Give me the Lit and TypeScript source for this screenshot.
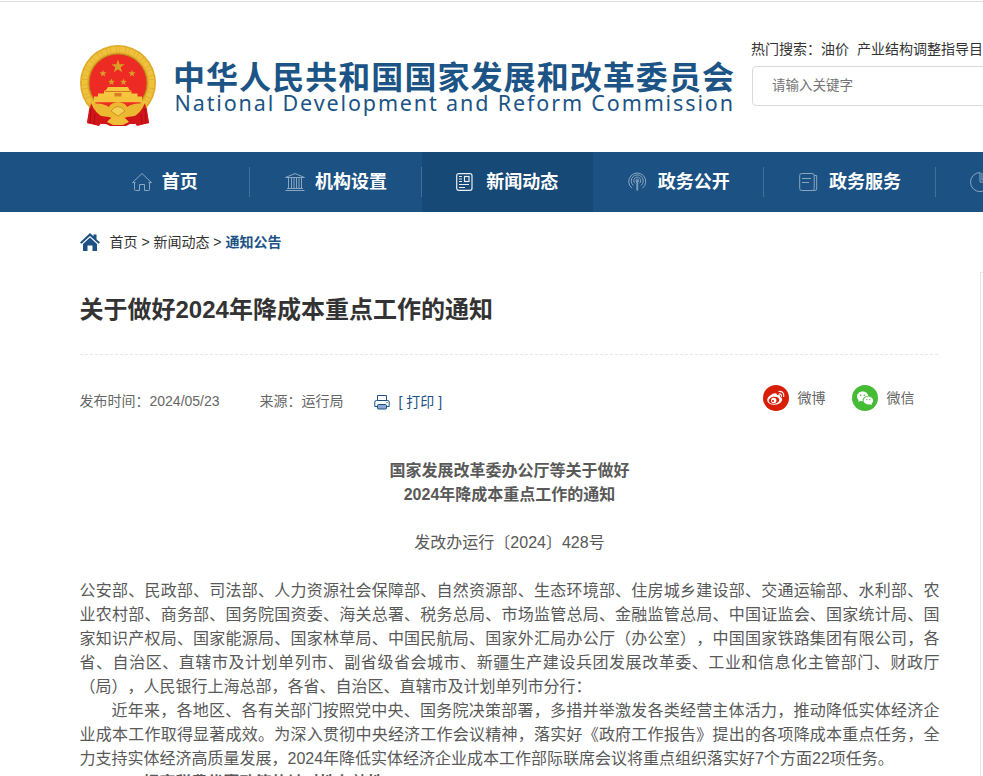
import { LitElement, html, svg, css } from "lit";
import { customElement } from "lit/decorators.js";
import { classMap } from "lit/directives/class-map.js";

const star = (cx: number, cy: number, r: number) => {
  const pts: string[] = [];
  for (let i = 0; i < 10; i++) {
    const rr = i % 2 ? r * 0.4 : r;
    const a = -Math.PI / 2 + (i * Math.PI) / 5;
    pts.push(`${(cx + rr * Math.cos(a)).toFixed(2)},${(cy + rr * Math.sin(a)).toFixed(2)}`);
  }
  return svg`<polygon points=${pts.join(" ")} fill="#d9a025"/>`;
};

const icons = {
  home: svg`<path d="M.5 10.6 10 1.5l9.500 9.100h-3M3.500 10.600H.5M2.500 11v6.500q0 1 1 1h4v-6h5v6h4q1 0 1-1V11"/>`,
  bank: svg`<path d="M.5 5.500 10 1.500l9.500 4zM.5 18.500h19M2 16.500h16M3.500 6v10.500M6.500 6v10.500M9 6v10.500M11.500 6v10.500M14 6v10.500M16.500 6v10.500"/>`,
  news: svg`<rect x=".7" y="1.700" width="15.300" height="16.600" rx="2"/><rect x="8.500" y="4.500" width="4.500" height="5"/><path d="M3 4.500h3M3 7h3M3 9.500h3M3 12.500h10M3 15.500h6"/>`,
  signal: svg`<path d="M4 16.200A8.500 8.500 0 1 1 14.500 16.200M5.400 13.500A6 6 0 1 1 13.100 13.500M7 11.300A3.500 3.500 0 1 1 11.500 11.300M8.900 18.500V8.500h.8v10"/><circle cx="9.300" cy="8.500" r="1.400"/>`,
  service: svg`<rect x=".7" y="1.500" width="14.500" height="17" rx="2"/><path d="M3 6.500h9M3 10.500h7M15.200 3.500h2.500V17q0 1.500-2 1.500h-2"/>`,
  chart: svg`<path d="M10 .6A9.500 9.500 0 1 0 19.500 10H10zM12 .6V8h7.300"/>`,
};

const nav: { icon: keyof typeof icons; label: string; active?: boolean }[] = [
  { icon: "home", label: "首页" },
  { icon: "bank", label: "机构设置" },
  { icon: "news", label: "新闻动态", active: true },
  { icon: "signal", label: "政务公开" },
  { icon: "service", label: "政务服务" },
  { icon: "chart", label: "" },
];

const lines: { text: string; full?: boolean; indent?: boolean; bold?: boolean }[] = [
  { text: "公安部、民政部、司法部、人力资源社会保障部、自然资源部、生态环境部、住房城乡建设部、交通运输部、水利部、农", full: true },
  { text: "业农村部、商务部、国务院国资委、海关总署、税务总局、市场监管总局、金融监管总局、中国证监会、国家统计局、国", full: true },
  { text: "家知识产权局、国家能源局、国家林草局、中国民航局、国家外汇局办公厅（办公室），中国国家铁路集团有限公司，各", full: true },
  { text: "省、自治区、直辖市及计划单列市、副省级省会城市、新疆生产建设兵团发展改革委、工业和信息化主管部门、财政厅", full: true },
  { text: "（局），人民银行上海总部，各省、自治区、直辖市及计划单列市分行：" },
  { text: "近年来，各地区、各有关部门按照党中央、国务院决策部署，多措并举激发各类经营主体活力，推动降低实体经济企", full: true, indent: true },
  { text: "业成本工作取得显著成效。为深入贯彻中央经济工作会议精神，落实好《政府工作报告》提出的各项降成本重点任务，全", full: true },
  { text: "力支持实体经济高质量发展，2024年降低实体经济企业成本工作部际联席会议将重点组织落实好7个方面22项任务。" },
  { text: "一、提高税费优惠政策的针对性有效性", indent: true, bold: true },
];

@customElement("site-header")
class SiteHeader extends LitElement {
  static styles = css`
    :host { display: block; padding-top: 1px; }
    .top { height: 150px; border-top: 1px solid #ddd; padding-left: 80px; display: flex; overflow: hidden; }
    .emblem { width: 76px; height: 82px; margin-top: 43px; flex: none; }
    .name { width: 564px; height: 66px; margin: 51px 0 0 17px; flex: none; }
    .cn { font: 700 32px "Noto Sans CJK SC", sans-serif; fill: #1b5485; }
    .en { font: 400 21.5px "Noto Sans", sans-serif; fill: #1b5485; }
    .side { margin: 37px 0 0 15px; width: 300px; flex: none; white-space: nowrap; }
    .hot { height: 20px; line-height: 20px; font-size: 14px; color: #333; display: flex; margin-left: -1px; }
    .hot span + span { margin-left: 8px; }
    .search { margin-top: 7px; height: 38px; line-height: 37px; border: 1px solid #d9d9d9; border-radius: 4px; padding-left: 19px; font-size: 13.5px; color: #757575; }
  `;
  render() {
    return html`<div class="top">
      <svg class="emblem" viewBox="0 0 76 82">
        <path d="M10 58 7 78l12 3 3-4 8 4h16l8-4 3 4 12-3-3-20z" fill="#d31519"/>
        <circle cx="38" cy="38" r="38" fill="#dfab28"/>
        <circle cx="38" cy="38" r="33.500" fill="none" stroke="#efc23e" stroke-width="5.500" stroke-dasharray="5 .8 3 .6"/>
        <circle cx="38" cy="38" r="29" fill="#ee2a24" stroke="#b98316"/>
        ${star(38, 21.500, 7)}${star(23, 28.500, 3.800)}${star(52, 28.500, 3.800)}${star(31.500, 37, 3.600)}${star(43.500, 37, 3.600)}
        <path d="M28 42h20l1.500 3 2 1v2.500h6V52H18v-3.500h6V46l2-1z" fill="#f6c63e"/>
        <path d="M25 46.500h26" stroke="#cf5c20" stroke-width=".8"/>
        <path d="M14 51.500h48v6H14z" fill="#f4c33b"/>
        <path d="M34.500 48h7v3.500h-7z" fill="#dd7a25"/>
        <path d="M15 57.500h46l-6 7H21z" fill="#ee2a24"/>
        <path d="M12 59q10-2 17 3 1-4 9-5 8 1 9 5 7-5 17-3-4 13-17 14l-9 3-9-3Q16 72 12 59z" fill="#edb831"/>
        <path d="M31 66q7-9 14 0l-7 5z" fill="#f6cf52" stroke="#bc8216" stroke-width=".7"/>
        <path d="M21 71l8 1 9 4 9-4 8-1v8H21z" fill="#d31519"/>
        <path d="M27 77q6-7 11-4 5-3 11 4l-6 3H33z" fill="#f1bd38"/>
        <path d="M11 58 7 78l12 2 4-8q-8-4-12-14zM65 58l4 20-12 2-4-8q8-4 12-14z" fill="#d31519"/>
        <path d="M11 64l-1 14M15 69l-1 10M61 69l1 10M65 64l1 14" stroke="#a50d12"/>
      </svg>
      <svg class="name" viewBox="0 0 564 66">
        <text class="cn" x="0" y="36" textLength="561">中华人民共和国国家发展和改革委员会</text>
        <text class="en" x="1.500" y="58" textLength="558.500">National Development and Reform Commission</text>
      </svg>
      <div class="side">
        <div class="hot"><span>热门搜索：油价</span><span>产业结构调整指导目录</span></div>
        <div class="search">请输入关键字</div>
      </div>
    </div>`;
  }
}

@customElement("site-nav")
class SiteNav extends LitElement {
  static styles = css`
    :host { display: block; }
    .bar { height: 60px; background: #1b5283; padding-left: 79px; display: flex; overflow: hidden; }
    .item { flex: none; width: 171.350px; height: 60px; display: flex; align-items: center; justify-content: center; gap: 10px; position: relative; color: #fff; font-size: 18px; font-weight: 700; }
    .item.active { background: #174977; }
    .rule { position: absolute; right: 0; top: 15px; width: 1px; height: 30px; background: #42709a; }
    .icon { width: 20px; height: 20px; fill: none; stroke: #8ba7c0; stroke-width: 1; }
    .active .icon { stroke: #e8eef4; stroke-width: 1.200; }
    .label { min-width: 36px; line-height: 61px; height: 60px; }
    .label:empty { min-width: 72px; }
  `;
  render() {
    return html`<div class="bar">
      ${nav.map((n) => html`<div class=${classMap({ item: true, active: !!n.active })}>
        <svg class="icon" viewBox="0 0 20 20">${icons[n.icon]}</svg><span class="label">${n.label}</span>
        ${n.active ? "" : html`<i class="rule"></i>`}
      </div>`)}
    </div>`;
  }
}

@customElement("article-page")
class ArticlePage extends LitElement {
  static styles = css`
    :host { display: block; }
    .page { display: flex; height: 564px; overflow: hidden; }
    .main { width: 860px; margin-left: 79.500px; flex: none; }
    .aside { flex: 1; margin: 60px 0 0 40.500px; border: 1px solid #e6e6ea; border-right: 0; border-bottom: 0; }
    .crumbs { height: 20px; margin-top: 20px; display: flex; align-items: center; font-size: 14px; color: #333; line-height: 20px; white-space: pre; }
    .crumbs svg { width: 20px; height: 18px; margin-right: 10px; }
    .crumbs b { color: #1b5283; }
    h1 { margin: 38px 0 0; height: 40px; line-height: 40px; font-size: 24px; font-weight: 700; color: #333; }
    .dash { height: 1px; margin-top: 24px; background: repeating-linear-gradient(90deg, #e6e6e6 0 3px, transparent 3px 5px); }
    .meta { display: flex; align-items: flex-start; height: 46px; margin-top: 30px; font-size: 14px; line-height: 20px; color: #666; }
    .date { width: 180px; margin-top: 6px; }
    .source { width: 114px; margin-top: 6px; }
    .print { display: flex; align-items: center; color: #1b5283; margin-top: 7px; white-space: pre; }
    .print svg { width: 16px; height: 16px; margin-right: 9px; }
    .share { margin-left: auto; margin-right: 25px; display: flex; align-items: center; }
    .share svg { width: 26px; height: 26px; margin-right: 9px; }
    .share span + svg { margin-left: 26px; }
    .body { font-size: 16px; line-height: 24px; color: #595959; white-space: nowrap; text-spacing-trim: space-all; }
    .head { text-align: center; margin-top: 28px; }
    .bold { font-weight: 700; }
    .number { text-align: center; margin: 24px 0; }
    .full { text-align: justify; text-align-last: justify; white-space: normal; height: 24px; text-justify: inter-character; }
    .indent { padding-left: 32px; }
  `;
  render() {
    return html`<div class="page">
      <div class="main">
        <div class="crumbs"><svg viewBox="0 0 20 18"><path d="M10 0 13.500 3.300V1.500h3v4.700L20 9.500l-1.500 1.300L10 3 1.500 10.800 0 9.500z" fill="#1b5283"/><path d="M3 11 10 4.600 17 11v7h-4.500v-5.500h-5V18H3z" fill="#1b5283"/></svg>首页 &gt; 新闻动态 &gt; <b>通知公告</b></div>
        <h1>关于做好2024年降成本重点工作的通知</h1>
        <div class="dash"></div>
        <div class="meta">
          <span class="date">发布时间：2024/05/23</span>
          <span class="source">来源：运行局</span>
          <span class="print"><svg viewBox="0 0 16 16" fill="none" stroke="#1b5283"><path d="M3.500 6.500v-5h9v5M3 12.500H.8V8q0-1.500 1.500-1.500h11.400q1.500 0 1.500 1.500v4.500H13"/><rect x="3.500" y="10.500" width="9" height="4.500" rx="1" fill="#8ca9d3"/><path d="M12.500 8.500h1"/></svg>[ 打印 ]</span>
          <span class="share">
            <svg viewBox="0 0 26 26"><circle cx="13" cy="13" r="13" fill="#d81e06"/><path d="M11 8.500c2-.8 3.300-.1 2.800 1.600 2.200-.7 4 .1 3.300 1.900 1.800.6 2.600 2 1.700 3.900-1.100 2.400-4.200 3.800-7.500 3.800-3.800 0-7.100-1.800-7.100-4.800 0-2.500 3.700-5.700 6.800-6.400z" fill="#fff"/><ellipse cx="11" cy="15.300" rx="5.300" ry="3.500" transform="rotate(-9 11 15.300)" fill="#d81e06"/><circle cx="10.700" cy="15.500" r="2.700" fill="#fff"/><circle cx="10" cy="16" r="1.100" fill="#d81e06"/><path d="M16 6.500c3-.5 5.500 2 4.700 5M16.200 9c1.500-.2 2.600.9 2.200 2.400" fill="none" stroke="#fff" stroke-width="1.200" stroke-linecap="round"/></svg><span>微博</span>
            <svg viewBox="0 0 26 26"><circle cx="13" cy="13" r="13" fill="#46bb36"/><path d="M10.500 6.500c3 0 5.500 2 5.700 4.500-3.300 0-6 2.200-5.500 5.200-1 0-1.600-.1-2.400-.3L6.200 17l.5-2C5.500 14 5 12.800 5 11.500c0-2.800 2.500-5 5.500-5z" fill="#fff"/><path d="M16.300 11.500c2.700 0 4.800 1.900 4.800 4.100 0 1.300-.6 2.300-1.600 3l.4 1.600-1.800-.9c-3.600.8-6.600-1.200-6.600-3.700 0-2.200 2.100-4.100 4.800-4.100z" fill="#fff"/><g fill="#46bb36"><circle cx="8.700" cy="10.200" r=".8"/><circle cx="12.300" cy="10.200" r=".8"/><circle cx="14.800" cy="14.600" r=".7"/><circle cx="17.800" cy="14.600" r=".7"/></g></svg><span>微信</span>
          </span>
        </div>
        <div class="body">
          <div class="head bold">国家发展改革委办公厅等关于做好<br />2024年降成本重点工作的通知</div>
          <div class="number">发改办运行〔2024〕428号</div>
          ${lines.map((l) => html`<div class=${classMap({ full: !!l.full, indent: !!l.indent, bold: !!l.bold })}>${l.text}</div>`)}
        </div>
      </div>
      <div class="aside"></div>
    </div>`;
  }
}

@customElement("app-root")
class AppRoot extends LitElement {
  static styles = css`
    :host { display: block; width: 983px; height: 776px; overflow: hidden; background: #fff; font-family: "Liberation Sans", "Noto Sans CJK SC", sans-serif; }
  `;
  render() {
    return html`<site-header lang="zh-CN"></site-header><site-nav lang="zh-CN"></site-nav><article-page lang="zh-CN"></article-page>`;
  }
}
